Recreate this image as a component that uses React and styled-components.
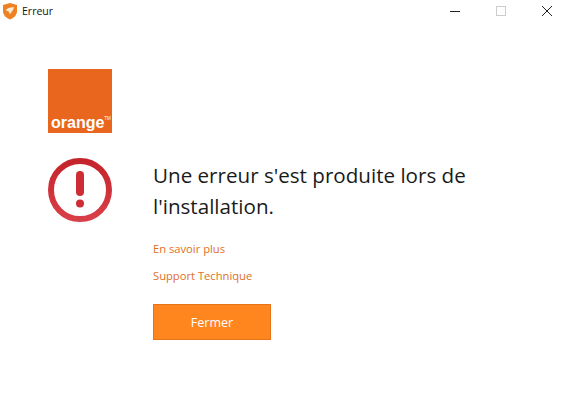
import React from "react";
import styled, { createGlobalStyle } from "styled-components";

const Global = createGlobalStyle`
  html, body { margin: 0; padding: 0; background: #fff; }
  body { font-family: "Open Sans", "Noto Sans", sans-serif; }
`;

const Window = styled.div`
  width: 566px;
  height: 414px;
  overflow: hidden;
  background: #fff;
`;

const TitleBar = styled.div`
  height: 22px;
  padding: 0 0 8px 2px;
  display: flex;
  align-items: center;
`;

const Title = styled.span`
  margin-left: 4px;
  font-size: 10.5px;
  color: #111;
  flex: 1;
`;

const WinControls = styled.div`
  display: flex;
  align-items: center;
  margin-right: -4px;
`;

const WinButton = styled.div`
  width: 46px;
  height: 22px;
  display: flex;
  align-items: center;
  justify-content: center;
`;

const Content = styled.div`
  padding: 39px 0 0 48px;
`;

const LogoBox = styled.div`
  width: 64px;
  height: 64px;
  background: #e9661e;
  display: flex;
  align-items: flex-end;
  box-sizing: border-box;
  padding: 0 0 1px 3px;
`;

const LogoText = styled.span`
  font-family: "Liberation Sans", Arial, sans-serif;
  font-weight: 700;
  font-size: 16px;
  line-height: 19px;
  color: #fff;
`;

const Tm = styled.sup`
  font-size: 4.5px;
  line-height: 0;
  vertical-align: 8px;
  font-weight: 400;
`;

const Main = styled.div`
  display: flex;
  margin-top: 25px;
`;

const IconCol = styled.div`
  width: 105px;
  flex: none;
`;

const Body = styled.div`
  display: flex;
  flex-direction: column;
  align-items: flex-start;
`;

const Message = styled.h1`
  margin: 2px 0 0;
  width: 330px;
  font-size: 20.6px;
  font-weight: 400;
  line-height: 31px;
  color: #1a1a1a;
`;

const SupportLink = styled.a`
  margin-top: ${(p) => p.$top}px;
  font-size: 11.2px;
  line-height: 16px;
  color: #e0701f;
  text-decoration: none;
`;

const CloseButton = styled.button`
  margin-top: 20px;
  width: 118px;
  height: 36px;
  border: 1px solid #e8741a;
  background: #ff861f;
  color: #fff;
  font-family: inherit;
  font-size: 12.5px;
  padding: 0;
`;

function ShieldIcon() {
  return (
    <svg width="16" height="18" viewBox="0 0 16 18">
      <path d="M8 1 L15 3 V9 C15 13 12 16 8 17.5 C4 16 1 13 1 9 V3 Z" fill="#ee8222" />
      <path d="M3.8 8.2 C5 6.2 8 5 12 5.2 C11.4 6.8 11.2 8.4 9.8 9.4 L8 12.2 L6.6 9.6 Z" fill="#fdebd3" />
    </svg>
  );
}

function ErrorIcon() {
  return (
    <svg width="64" height="64" viewBox="0 0 64 64" style={{ display: "block" }}>
      <defs>
        <linearGradient id="err" x1="0" y1="0" x2="0" y2="1">
          <stop offset="0" stopColor="#c4242b" />
          <stop offset="1" stopColor="#d93f49" />
        </linearGradient>
      </defs>
      <circle cx="32" cy="32" r="29" fill="none" stroke="url(#err)" strokeWidth="6" />
      <rect x="28" y="13" width="8" height="25" rx="4" fill="#cf2d35" />
      <circle cx="32" cy="45.5" r="4" fill="#cf2d35" />
    </svg>
  );
}

export default function App() {
  return (
    <Window>
      <Global />
      <TitleBar>
        <ShieldIcon />
        <Title>Erreur</Title>
        <WinControls>
          <WinButton>
            <svg width="12" height="12" viewBox="0 0 12 12"><path d="M1 6.5H11" stroke="#222" /></svg>
          </WinButton>
          <WinButton>
            <svg width="12" height="12" viewBox="0 0 12 12"><rect x="1.5" y="1.5" width="9" height="9" fill="none" stroke="#ccc" /></svg>
          </WinButton>
          <WinButton>
            <svg width="12" height="12" viewBox="0 0 12 12"><path d="M1 1L11 11M11 1L1 11" stroke="#222" /></svg>
          </WinButton>
        </WinControls>
      </TitleBar>
      <Content>
        <LogoBox>
          <LogoText>orange<Tm>TM</Tm></LogoText>
        </LogoBox>
        <Main>
          <IconCol>
            <ErrorIcon />
          </IconCol>
          <Body>
            <Message>Une erreur s'est produite lors de l'installation.</Message>
            <SupportLink href="#" $top={19}>En savoir plus</SupportLink>
            <SupportLink href="#" $top={11}>Support Technique</SupportLink>
            <CloseButton>Fermer</CloseButton>
          </Body>
        </Main>
      </Content>
    </Window>
  );
}
